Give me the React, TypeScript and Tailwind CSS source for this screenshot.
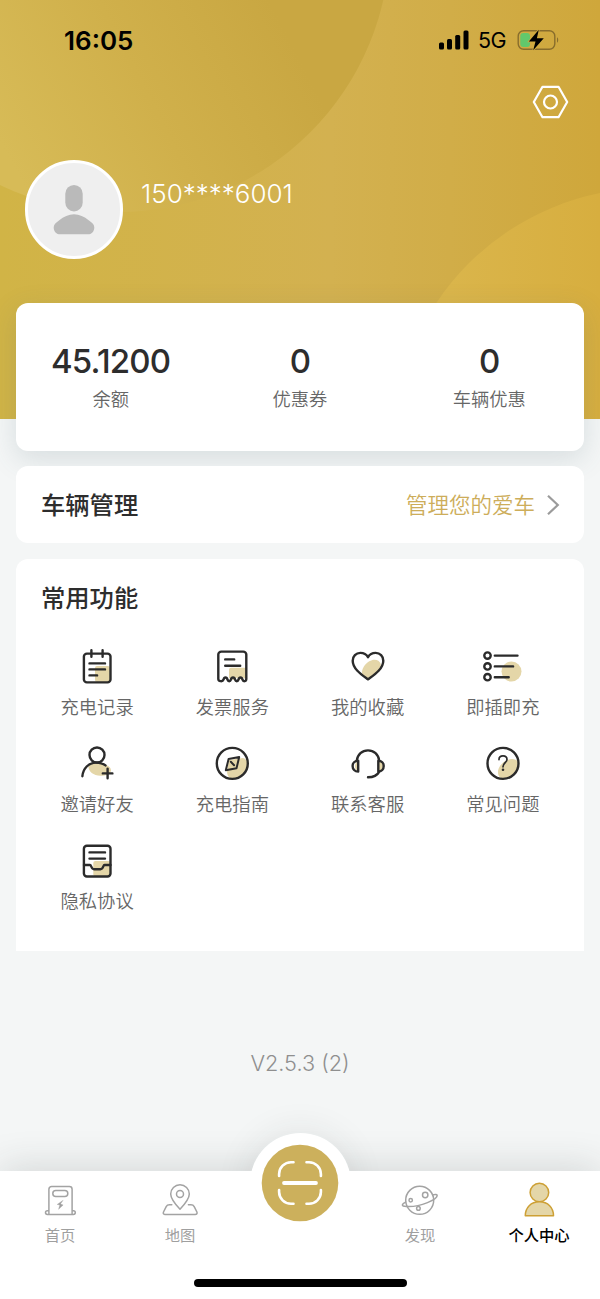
import type { ReactNode } from 'react';

type Feature = {
    label: string;
    icon: ReactNode;
}

const TAN = '#e4d6a8';

function LineIcon({ children }: { children: ReactNode }) {
    return (
        <svg viewBox="0 0 40 40" className="h-10 w-10" fill="none" stroke="#2b2b2b" strokeWidth="2.4" strokeLinecap="round" strokeLinejoin="round">
            {children}
        </svg>
    );
}

const features: Feature[] = [
    {
        label: '充电记录',
        icon: (
            <LineIcon>
                <rect x="18" y="19" width="15" height="16" rx="2" fill={TAN} stroke="none" />
                <rect x="6.9" y="6.6" width="26.6" height="28.8" rx="3" />
                <path d="M14.4 3.2v6.6M25.6 3.2v6.6M12.5 16.4h15.5M12.5 22.4h15.5M12.5 28.4h7.6" />
            </LineIcon>
        ),
    },
    {
        label: '发票服务',
        icon: (
            <LineIcon>
                <path d="M17 22.7a2 2 0 0 1 2-2h15v11.5l-3-1.7-3.5 2.5-3-2.5-3 2.5-4.5-2z" fill={TAN} stroke="none" />
                <path d="M6.3 32V7.6a3 3 0 0 1 3-3h22a3 3 0 0 1 3 3V32c0 2.6-3.1 2.9-3.8.7-.7-3-3.3-3-4 0-.6 2-2.8 2-3.4 0-.7-3-3.5-3-4.2 0-.6 2-2.8 2-3.4 0-.7-3-3.3-3-4 0-.8 2.2-5.2 1.9-5.2-.7z" />
                <path d="M13.2 12.4h9M13.2 18.7h15" />
            </LineIcon>
        ),
    },
    {
        label: '我的收藏',
        icon: (
            <LineIcon>
                <path d="M20 32.2L14.5 27.5C12 22 19.5 12.7 26.5 12.7c3 0 5.3 1.5 6.3 4.3.5 5-6.8 11.5-12.8 15.2z" fill={TAN} stroke="none" />
                <path d="M20 32.4C14 28 4.7 22 4.7 13.7 4.7 9.2 8 5.9 12.3 5.9c3.2 0 6.2 1.5 7.7 4.3 1.5-2.8 4.5-4.3 7.7-4.3 4.3 0 7.6 3.3 7.6 7.8C35.3 22 26 28 20 32.4z" />
            </LineIcon>
        ),
    },
    {
        label: '即插即充',
        icon: (
            <LineIcon>
                <circle cx="28.5" cy="24.5" r="10" fill={TAN} stroke="none" />
                <circle cx="4.5" cy="8.6" r="3.2" />
                <circle cx="4.5" cy="19.4" r="3.2" />
                <circle cx="4.5" cy="30.2" r="3.2" />
                <path d="M11.8 8.6H34.5M11.8 19.4h18.3M11.8 30.2H25.7" />
            </LineIcon>
        ),
    },
    {
        label: '邀请好友',
        icon: (
            <LineIcon>
                <path d="M11.3 21.5c5-3.5 13-3.5 17.7-.5 3.3 1 5 3 5 5.5 0 3-4.5 5.3-10.5 5.3-7 0-12.2-4.3-12.2-10.3z" fill={TAN} stroke="none" />
                <circle cx="20" cy="11" r="7.5" />
                <path d="M5.4 32.2C6 24.5 11.7 18.6 19 18.6c3.7 0 7 .8 9.5 2.8M30.6 24.6v9.6M25.8 29.4h9.6" />
            </LineIcon>
        ),
    },
    {
        label: '充电指南',
        icon: (
            <LineIcon>
                <path d="M15 27l2-11 14-2c2 .5 4 2 4.7 4C36 27 29 35 20 35.3 16.5 34 14.8 31 15 27z" fill={TAN} stroke="none" />
                <circle cx="20.3" cy="19.4" r="15.5" />
                <path d="M16.6 15l10.6-1.9-2.7 11.2-10.7 1.9zM18.8 17.8l3.3 3.5" strokeWidth="2" />
            </LineIcon>
        ),
    },
    {
        label: '联系客服',
        icon: (
            <LineIcon>
                <path d="M10 17.5v9.5c-2-.5-3-2.5-3-4.7s1-4.2 3-4.8zM31 17v10c2.5-.5 4-2.5 4-5s-1.5-4.5-4-5z" fill={TAN} stroke="none" />
                <path d="M8.8 16.7C9.5 10.5 14.1 6.4 20 6.4s10.5 4.1 11.2 10.3M10.2 16.7v10.9c-3.5 0-5.6-2.4-5.6-5.5s2.1-5.4 5.6-5.4zM30.3 16.7v10.9c3.3 0 5.4-2.4 5.4-5.5s-2.1-5.4-5.4-5.4zM31.3 27.6c-2 3.7-6 5.7-11.3 5.7" />
            </LineIcon>
        ),
    },
    {
        label: '常见问题',
        icon: (
            <LineIcon>
                <path d="M15 29c-.5-7 7-14 14-14 2.5 0 5 1 6 2.5C36 26 29 34.5 20 34.8c-3-.5-5-2.8-5-5.8z" fill={TAN} stroke="none" />
                <circle cx="20" cy="19.4" r="15.5" />
                <path d="M16 15.6c0-2.1 1.7-3.7 4-3.7s4 1.5 4 3.7c0 2.9-4 3.5-4 7.2" strokeWidth="1.7" />
                <circle cx="20" cy="25.8" r="1.3" fill="#2b2b2b" stroke="none" />
            </LineIcon>
        ),
    },
    {
        label: '隐私协议',
        icon: (
            <LineIcon>
                <rect x="16.3" y="20" width="17" height="15.3" rx="2" fill={TAN} stroke="none" />
                <rect x="6.9" y="4.7" width="26.6" height="30.8" rx="3" />
                <path d="M12.5 11.4h15.5M12.5 17.6h15.5M7 24h6c1.5 0 1.2 4.2 4 4.2h6.5c2.8 0 2.5-4.2 4-4.2h6" />
            </LineIcon>
        ),
    },
];

const stats = [
    { value: '45.1200', label: '余额' },
    { value: '0', label: '优惠券' },
    { value: '0', label: '车辆优惠' },
];

function TabIcon({ children }: { children: ReactNode }) {
    return (
        <svg viewBox="0 0 40 40" className="h-10 w-10" fill="none" stroke="#a3a3a3" strokeWidth="1.5" strokeLinecap="round" strokeLinejoin="round">
            {children}
        </svg>
    );
}

function HeaderBackground() {
    return (
        <svg className="absolute inset-0 h-full w-full" viewBox="0 0 600 419" preserveAspectRatio="none">
            <defs>
                <linearGradient id="base" x1="0" y1="0" x2="1" y2="0">
                    <stop offset="0" stopColor="#d1b446" />
                    <stop offset="0.55" stopColor="#d3b150" />
                    <stop offset="0.75" stopColor="#d1ad48" />
                    <stop offset="1" stopColor="#cfa73b" />
                </linearGradient>
                <linearGradient id="disc" gradientUnits="userSpaceOnUse" x1="20" y1="180" x2="290" y2="40">
                    <stop offset="0" stopColor="#d7bb57" />
                    <stop offset="0.5" stopColor="#d0b04b" />
                    <stop offset="1" stopColor="#c9a742" />
                </linearGradient>
                <linearGradient id="glow" gradientUnits="userSpaceOnUse" x1="450" y1="0" x2="600" y2="0">
                    <stop offset="0" stopColor="#dab54b" />
                    <stop offset="1" stopColor="#d7ae3f" />
                </linearGradient>
            </defs>
            <rect width="600" height="419" fill="url(#base)" />
            <circle cx="118" cy="-60" r="272" fill="url(#disc)" />
            <circle cx="651" cy="446" r="258" fill="url(#glow)" />
        </svg>
    );
}

function StatusBar() {
    return (
        <div className="flex h-20 items-center justify-between pr-10 pl-16">
            <span className="pt-0.5 font-[Inter] text-[26px] leading-none font-semibold text-black">16:05</span>
            <div className="flex items-center">
                <svg viewBox="0 0 32 20" className="h-5 w-8" fill="#000">
                    <rect x="1" y="12.5" width="5" height="7" rx="1.5" />
                    <rect x="9" y="9" width="5" height="10.5" rx="1.5" />
                    <rect x="17.2" y="5" width="5" height="14.5" rx="1.5" />
                    <rect x="25.5" y="0.5" width="5" height="19" rx="1.5" />
                </svg>
                <span className="ml-2 w-[38px] pt-0.5 font-[Inter] text-[21.5px] leading-none tracking-[-0.5px] text-black">5G</span>
                <svg viewBox="0 0 44 24" className="h-6 w-11">
                    <rect x="2.2" y="2.7" width="36.600" height="18.600" rx="5.5" fill="none" stroke="#886d2c" strokeWidth="1.4" />
                    <path d="M41 9.3c1.6.6 1.6 4.8 0 5.4z" fill="#886d2c" />
                    <rect x="4.3" y="5" width="9.7" height="14" rx="3" fill="#62c86c" />
                    <path d="M22.8 1.800L12.800 13.600h6.700L17.200 22.300l10.600-12h-6.900z" fill="#000" stroke="#d1ab41" strokeWidth="1.5" paintOrder="stroke" />
                </svg>
            </div>
        </div>
    );
}

export default function App() {
    return (
        <div className="flex h-[1299px] w-full flex-col bg-[#f4f6f6] font-['Noto_Sans_CJK_SC',sans-serif]">
            <header className="relative h-[419px] shrink-0">
                <HeaderBackground />
                <div className="relative">
                    <StatusBar />
                    <div className="flex h-20 justify-end pt-1 pr-[30px]">
                        <svg viewBox="0 0 40 36" className="h-9 w-10" fill="none" stroke="#fff" strokeWidth="2.2" strokeLinejoin="round">
                            <path d="M12.5 2.8h16L37.2 18l-8.7 15.2h-16L3.8 18z" />
                            <circle cx="20.5" cy="18" r="6.5" />
                        </svg>
                    </div>
                    <div className="flex pl-[25px]">
                        <div className="flex h-[99px] w-[98px] items-center justify-center rounded-full border-[3px] border-white bg-[#efefef]">
                            <svg viewBox="0 0 42 50" className="h-[50px] w-[42px]" fill="#bababa">
                                <rect x="12.3" y="0" width="17.4" height="26.4" rx="8.7" />
                                <path d="M21 29.2c5.5 0 10 2.3 15 6.2 3.4 2.5 5.3 4 5.3 7 0 4-2.8 6.9-6.5 6.9H7.2c-3.7 0-6.5-2.9-6.5-6.9 0-3 1.9-4.5 5.3-7 5-3.9 9.5-6.2 15-6.2z" />
                            </svg>
                        </div>
                        <p className="mt-[19px] ml-[18px] font-[Inter] text-[26px] leading-[30px] font-[350] text-white">150****6001</p>
                    </div>
                </div>
            </header>

            <main className="relative -mt-[116px] flex flex-col px-4">
                <section className="grid h-[148px] grid-cols-3 rounded-xl bg-white pt-9 text-center shadow-[0_8px_28px_rgba(70,100,110,0.17)]">
                    {stats.map(stat => (
                        <div key={stat.label}>
                            <p className="font-[Inter] text-[33px] leading-[44px] font-medium tracking-[-0.8px] text-[#2d2d2d]">{stat.value}</p>
                            <p className="mt-[2px] text-[18.3px] leading-[26px] font-[350] text-[#666666]">{stat.label}</p>
                        </div>
                    ))}
                </section>

                <section className="relative mt-[15px] flex h-[77px] items-center justify-between rounded-xl bg-white pr-6 pl-[25px]">
                    <h2 className="text-[24.3px] font-medium text-[#2d2d2d]">车辆管理</h2>
                    <div className="flex items-center">
                        <span className="text-[21.5px] font-[350] text-[#cdad5a]">管理您的爱车</span>
                        <svg viewBox="0 0 14 24" className="ml-[11px] h-6 w-[14px]" fill="none" stroke="#9b9b9b" strokeWidth="2.2">
                            <path d="M2 2.8l9.8 9.2L2 21.2" />
                        </svg>
                    </div>
                </section>

                <section className="mt-4 h-[392px] rounded-t-xl bg-white px-[13.5px]">
                    <h2 className="pt-5 pl-[11.5px] text-[24.3px] leading-9 font-medium text-[#2d2d2d]">常用功能</h2>
                    <div className="mt-8 grid grid-cols-4">
                        {features.map(item => (
                            <div key={item.label} className="flex h-[97px] flex-col items-center">
                                {item.icon}
                                <span className="mt-[6px] text-[18.3px] leading-[26px] font-[350] text-[#666666]">{item.label}</span>
                            </div>
                        ))}
                    </div>
                </section>

                <p className="mt-[97px] text-center font-[Inter] text-[21.7px] leading-[30px] font-[350] text-[#8f8f8f]">V2.5.3 (2)</p>
            </main>

            <footer className="relative mt-auto h-32 shrink-0 shadow-[0_-4px_36px_rgba(40,45,50,0.15)]">
                {/* round bump that carries the scan button */}
                <div className="absolute -top-[38px] left-[249.5px] h-[101px] w-[101px] rounded-full bg-white shadow-[0_0_36px_rgba(40,45,50,0.1)]" />
                <nav className="relative grid h-full grid-cols-5 bg-white pt-[9px] text-[15.3px] leading-[22px] text-[#9f9f9f]">
                    <div className="flex flex-col items-center">
                        <TabIcon>
                            <path d="M8.9 30.7V9.3a2.7 2.7 0 0 1 2.7-2.7h17.8a2.7 2.7 0 0 1 2.7 2.7v21.4h1.3a1.9 1.9 0 0 1 0 3.8H7.4a1.9 1.9 0 0 1 0-3.8h1.5v3.8M32.1 30.7v3.8" />
                            <rect x="12.8" y="10.6" width="15" height="6" rx="3" />
                            <path d="M22.8 20.5l-5.6 3.9 2.6.7-1.2 4.2 4.5-4.3-2.5-.9z" fill="#9f9f9f" strokeWidth=".4" />
                        </TabIcon>
                        <span className="mt-[3px]">首页</span>
                    </div>
                    <div className="flex flex-col items-center">
                        <TabIcon>
                            <path d="M20 29.3c-4-4.3-9.3-9.8-9.3-15.2a9.3 9.3 0 0 1 18.6 0c0 5.4-5.3 10.9-9.3 15.2z" />
                            <circle cx="20" cy="14" r="3.5" />
                            <path d="M11.8 24.7H9.5c-1.8 0-2.6.5-3.3 1.9L3.5 32c-.6 1.4-.1 2.4 1.3 2.4h30.4c1.6 0 2.3-1 1.7-2.4l-2.7-5.4c-.7-1.4-1.5-1.9-3.3-1.9h-2.5" />
                        </TabIcon>
                        <span className="mt-[3px]">地图</span>
                    </div>
                    <div className="relative">
                        <svg viewBox="0 0 78 78" className="absolute -top-[36px] left-[21px] h-[78px] w-[78px]" fill="none" stroke="#fff" strokeWidth="2.6" strokeLinecap="round">
                            <circle cx="39" cy="39" r="38.3" fill="#ccb05c" stroke="none" />
                            <path d="M32.5 18.2H30A12 12 0 0 0 18.1 30v2M45.5 18.2H48A12 12 0 0 1 59.9 30v2M32.5 59.8H30A12 12 0 0 1 18.1 48v-2M45.5 59.8H48A12 12 0 0 0 59.9 48v-2" />
                            <path d="M23 39h32" strokeWidth="3.8" />
                        </svg>
                    </div>
                    <div className="flex flex-col items-center">
                        <TabIcon>
                            <circle cx="19.7" cy="20.3" r="14" />
                            <circle cx="25.2" cy="15" r="2.7" />
                            <circle cx="10.7" cy="20.3" r="1.7" />
                            <circle cx="18.4" cy="28.4" r="1.8" />
                            <path d="M32.5 14.9c3-.8 4.7-.6 4.7.7 0 2-4.2 4.8-9.7 7C21 25.2 12 26.9 6.5 26.5c-3 0-4.4-.6-4.1-1.7.2-.8 1.2-1.7 3.2-2.7" />
                        </TabIcon>
                        <span className="mt-[3px]">发现</span>
                    </div>
                    <div className="flex flex-col items-center text-black">
                        <svg viewBox="0 0 40 40" className="h-10 w-10" fill="#e4d6a8" stroke="#cda035" strokeWidth="1.5" strokeLinejoin="round">
                            <circle cx="19.4" cy="12.5" r="9.3" />
                            <path d="M5.3 35.7c0-8.2 5.6-13.9 14.1-13.9s14.1 5.7 14.1 13.9z" />
                        </svg>
                        <span className="mt-[3px] mr-[2px] font-medium">个人中心</span>
                    </div>
                </nav>
                <div className="absolute bottom-[12.5px] left-[193.5px] h-2 w-[213.5px] rounded-full bg-black" />
            </footer>
        </div>
    );
}
